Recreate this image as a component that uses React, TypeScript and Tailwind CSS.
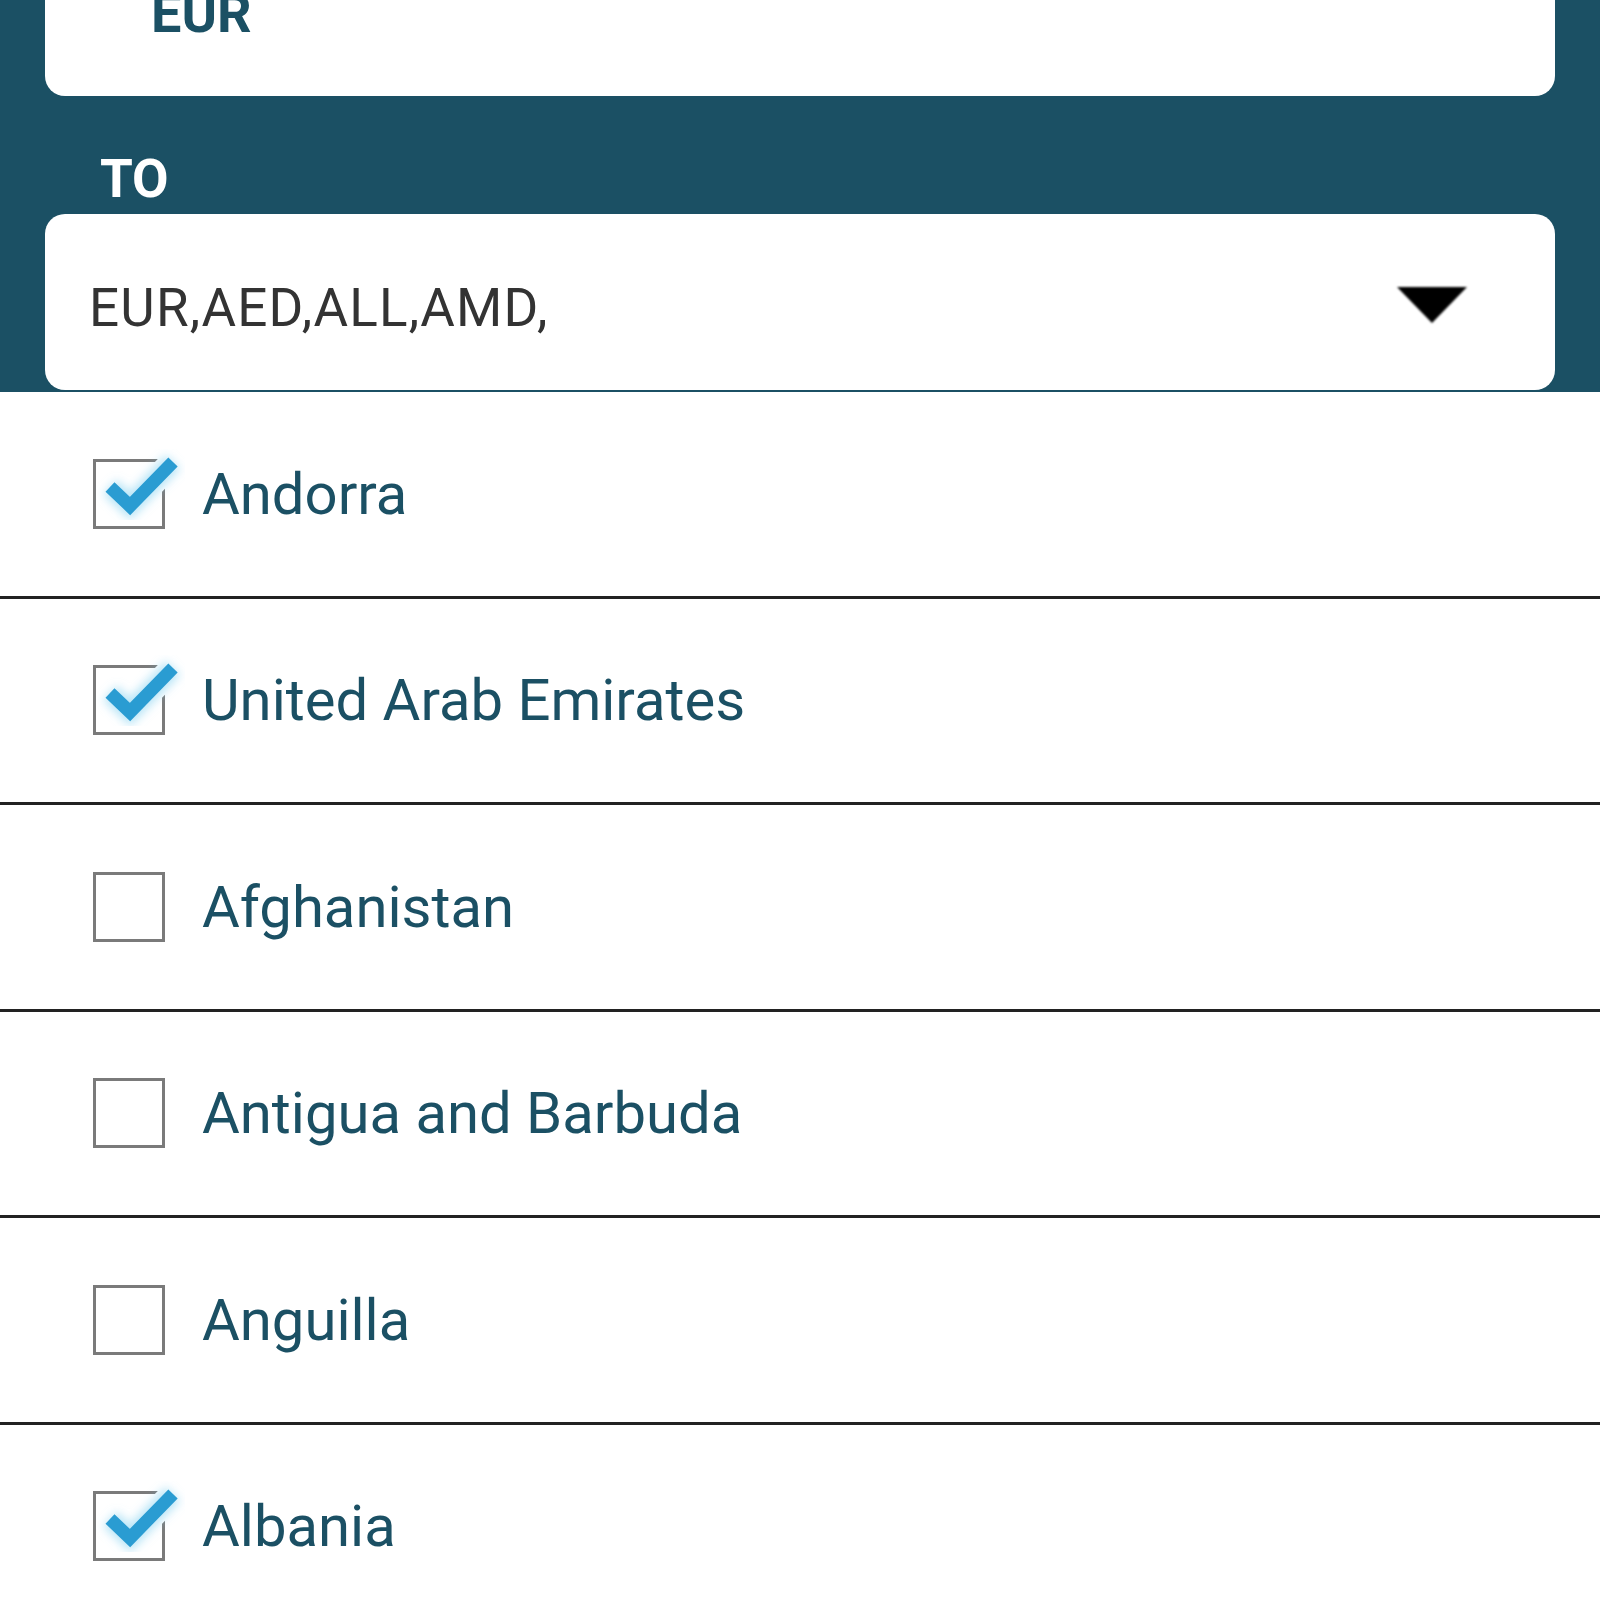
import React from "react";

const TEAL = "#1b5064";

const COUNTRIES: { name: string; checked: boolean }[] = [
  { name: "Andorra", checked: true },
  { name: "United Arab Emirates", checked: true },
  { name: "Afghanistan", checked: false },
  { name: "Antigua and Barbuda", checked: false },
  { name: "Anguilla", checked: false },
  { name: "Albania", checked: true },
];

function CheckBox({ checked }: { checked: boolean }) {
  return (
    <svg width="100" height="90" viewBox="0 0 100 90" className="shrink-0">
      <defs>
        <filter id="glow" x="-30%" y="-30%" width="160%" height="160%">
          <feGaussianBlur stdDeviation="5" />
        </filter>
      </defs>
      <rect x="9.5" y="11.5" width="69" height="67" fill="none" stroke="#7a7a7a" strokeWidth="3" />
      {checked && (
        <>
          <polyline points="25,38 45,57 88,13" fill="none" stroke="#ffffff" strokeWidth="26" />
          <polyline
            points="25,38 45,57 88,13"
            fill="none"
            stroke="#7fcff0"
            strokeOpacity="0.55"
            strokeWidth="20"
            filter="url(#glow)"
          />
          <polyline points="25,38 45,57 88,13" fill="none" stroke="#2a9cd2" strokeWidth="13" />
        </>
      )}
    </svg>
  );
}

export default function App() {
  return (
    <div
      className="w-[1600px] h-[1600px] overflow-hidden bg-white"
      style={{ fontFamily: "Roboto, 'Liberation Sans', sans-serif" }}
    >
      {/* Header: FROM / TO selectors */}
      <div className="bg-[#1b5064] px-[45px] pb-[2px]">
        <div className="h-[96px] bg-white rounded-b-[20px] pl-[106px] overflow-hidden">
          <div className="-mt-[13px] text-[54px] leading-none font-bold text-[#1b5064]">EUR</div>
        </div>
        <div className="mt-[57px] pl-[55px] text-[53px] leading-none font-bold text-white">TO</div>
        <div className="mt-[8px] h-[176px] bg-white rounded-[20px] flex items-start justify-between pl-[44px] pr-[86px]">
          <span className="mt-[68px] text-[53px] leading-none tracking-[1.2px] text-[#333333]">
            EUR,AED,ALL,AMD,
          </span>
          <svg width="74" height="42" viewBox="0 0 74 42" className="mt-[70px]">
            <defs>
              <filter id="soft">
                <feGaussianBlur stdDeviation="1.2" />
              </filter>
            </defs>
            <polygon points="2,3 72,3 37,39" fill="#000" filter="url(#soft)" />
          </svg>
        </div>
      </div>

      {/* Country list */}
      <div className="flex flex-col">
        {COUNTRIES.map((c) => (
          <div
            key={c.name}
            className="h-[206.5px] shrink-0 flex items-center pl-[85px] border-b-[3px] border-[#222222]"
          >
            <CheckBox checked={c.checked} />
            <span className="ml-[17px] text-[58px] leading-none" style={{ color: TEAL }}>
              {c.name}
            </span>
          </div>
        ))}
      </div>
    </div>
  );
}
